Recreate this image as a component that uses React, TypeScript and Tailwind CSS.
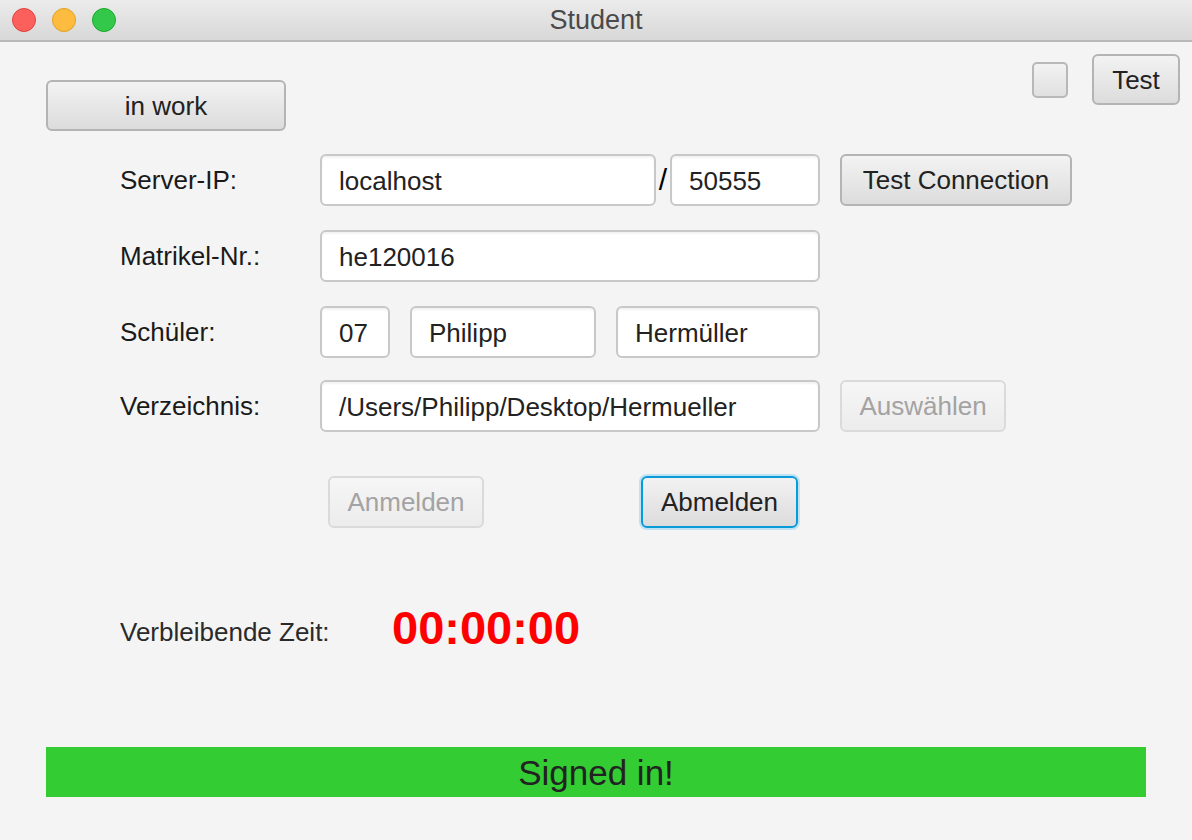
import React from 'react'

const FONT = { fontFamily: '"Liberation Sans", Arial, Helvetica, sans-serif' }

function Button({
  children,
  className = '',
  disabled = false,
  focused = false,
}: {
  children?: React.ReactNode
  className?: string
  disabled?: boolean
  focused?: boolean
}) {
  const base = 'flex items-center justify-center rounded-[6px] text-[26px] leading-none'
  const look = disabled
    ? 'border-2 border-[#dadada] bg-gradient-to-b from-[#f6f6f6] to-[#ececec] text-[#a3a3a3]'
    : focused
      ? 'border-2 border-[#0a9ad8] bg-gradient-to-b from-[#f2f2f2] to-[#dcdcdc] text-[#222] shadow-[0_0_0_2px_#bfe3f5]'
      : 'border-2 border-[#b4b4b4] bg-gradient-to-b from-[#f3f3f3] to-[#dcdcdc] text-[#222]'
  return <div className={`${base} ${look} ${className}`}>{children}</div>
}

function Field({ value, className = '' }: { value: string; className?: string }) {
  return (
    <div
      className={`flex h-[52px] items-center rounded-[6px] border-2 border-[#c8c8c8] bg-white pl-[17px] pt-[2px] text-[26px] leading-none text-[#222] shadow-[inset_0_2px_2px_rgba(0,0,0,0.05)] ${className}`}
    >
      {value}
    </div>
  )
}

function Label({ children }: { children: React.ReactNode }) {
  return <div className="w-[200px] shrink-0 text-[26px] leading-none text-[#1a1a1a]">{children}</div>
}

export default function App() {
  return (
    <div className="h-[840px] w-[1192px] overflow-hidden bg-[#f4f4f4]" style={FONT}>
      {/* title bar */}
      <div className="relative flex h-[42px] items-center border-b-2 border-[#b9b9b9] bg-gradient-to-b from-[#ececec] to-[#d8d8d8]">
        <div className="flex items-center gap-[16px] pl-[12px]">
          <span className="h-[24px] w-[24px] rounded-full border border-[#e0443e] bg-[#fc605c]" />
          <span className="h-[24px] w-[24px] rounded-full border border-[#dea123] bg-[#fdbc40]" />
          <span className="h-[24px] w-[24px] rounded-full border border-[#1aab29] bg-[#34c84a]" />
        </div>
        <div className="absolute inset-x-0 top-0 flex h-[40px] items-center justify-center text-[27px] text-[#4a4a4a]">
          Student
        </div>
      </div>

      <div className="pl-[46px] pr-[12px] pt-[12px]">
        {/* top row */}
        <div className="flex items-start justify-between">
          <Button className="mt-[26px] h-[51px] w-[240px]">in work</Button>
          <div className="flex items-center gap-[24px]">
            <div className="h-[36px] w-[36px] rounded-[5px] border-2 border-[#b8b8b8] bg-gradient-to-b from-[#f2f2f2] to-[#e0e0e0]" />
            <Button className="h-[51px] w-[88px]">Test</Button>
          </div>
        </div>

        {/* form */}
        <div className="mt-[23px] flex flex-col pl-[74px]">
          <div className="flex items-center">
            <Label>Server-IP:</Label>
            <Field value="localhost" className="w-[336px]" />
            <div className="w-[14px] text-center text-[30px] leading-none text-black">/</div>
            <Field value="50555" className="w-[150px]" />
            <Button className="ml-[20px] h-[52px] w-[232px]">Test Connection</Button>
          </div>

          <div className="mt-[24px] flex items-center">
            <Label>Matrikel-Nr.:</Label>
            <Field value="he120016" className="w-[500px]" />
          </div>

          <div className="mt-[24px] flex items-center">
            <Label>Schüler:</Label>
            <Field value="07" className="w-[70px]" />
            <Field value="Philipp" className="ml-[20px] w-[186px]" />
            <Field value="Hermüller" className="ml-[20px] w-[204px]" />
          </div>

          <div className="mt-[22px] flex items-center">
            <Label>Verzeichnis:</Label>
            <Field value="/Users/Philipp/Desktop/Hermueller" className="w-[500px]" />
            <Button disabled className="ml-[20px] h-[52px] w-[166px]">
              Auswählen
            </Button>
          </div>

          <div className="mt-[44px] flex items-center pl-[208px]">
            <Button disabled className="h-[52px] w-[156px]">
              Anmelden
            </Button>
            <Button focused className="ml-[157px] h-[52px] w-[157px]">
              Abmelden
            </Button>
          </div>

          <div className="mt-[76px] flex items-center">
            <div className="w-[272px] shrink-0 pt-[8px] text-[26px] leading-none text-[#2a2a2a]">Verbleibende Zeit:</div>
            <div className="text-[47px] font-bold leading-none text-[#ff0000]">00:00:00</div>
          </div>
        </div>

        {/* status bar */}
        <div className="mt-[96px] flex h-[50px] w-[1100px] items-center justify-center bg-[#33cc33] text-[35px] leading-none text-[#222]">
          Signed in!
        </div>
      </div>
    </div>
  )
}
